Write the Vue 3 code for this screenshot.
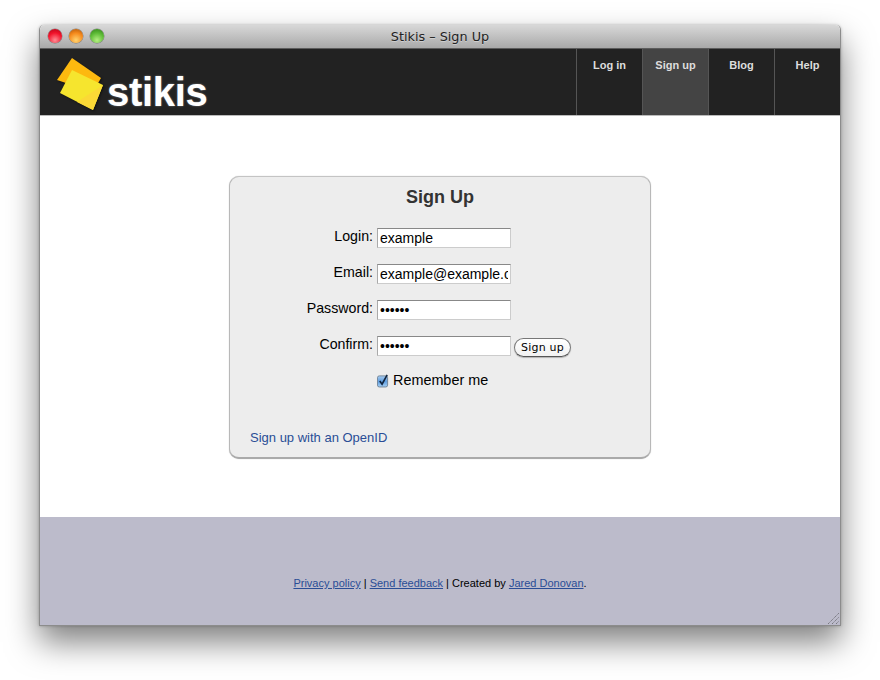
<script setup>
const navItems = [
  { label: 'Log in', active: false },
  { label: 'Sign up', active: true },
  { label: 'Blog', active: false },
  { label: 'Help', active: false }
]
const fields = [
  { label: 'Login:', type: 'text', value: 'example' },
  { label: 'Email:', type: 'text', value: 'example@example.com' },
  { label: 'Password:', type: 'password', value: 'secret' },
  { label: 'Confirm:', type: 'password', value: 'secret' }
]
</script>

<template>
  <div class="page">
    <div class="window">
      <div class="titlebar">
        <div class="lights">
          <span class="light red"></span>
          <span class="light amber"></span>
          <span class="light green"></span>
        </div>
        <span class="title">Stikis – Sign Up</span>
      </div>
      <header class="header">
        <div class="logo">
          <svg class="mark" width="52" height="57" viewBox="0 0 52 57">
            <polygon points="17,4 46,24 38,38 2,26" fill="#fdb90f" />
            <polygon points="17,16 48,31 38,56 5,39" fill="#f6e52e" />
            <polygon points="48,31 38,56 22,48" fill="#fbd936" />
          </svg>
          <span class="wordmark">stikis</span>
        </div>
        <nav class="nav">
          <a v-for="item in navItems" :key="item.label" class="nav-item" :class="{ active: item.active }">{{ item.label }}</a>
        </nav>
      </header>
      <main class="main">
        <section class="card">
          <h1 class="card-title">Sign Up</h1>
          <form class="form" @submit.prevent>
            <div v-for="(field, i) in fields" :key="field.label" class="row">
              <label class="label">{{ field.label }}</label>
              <input class="input" :type="field.type" :value="field.value" />
              <button v-if="i === 3" class="button" type="button">Sign up</button>
            </div>
            <div class="remember">
              <span class="check">
                <svg width="13" height="15" viewBox="0 0 13 15">
                  <defs>
                    <linearGradient id="checkFill" x1="0" y1="0" x2="0" y2="1">
                      <stop offset="0" stop-color="#a9cdf0" />
                      <stop offset="0.5" stop-color="#5f9ee0" />
                      <stop offset="1" stop-color="#a6d0f5" />
                    </linearGradient>
                  </defs>
                  <rect x="0.5" y="2.5" width="11" height="12" rx="2" fill="url(#checkFill)" stroke="#6f8296" />
                  <path d="M3 8 L5.5 11.5 L11 1.5" fill="none" stroke="#10243e" stroke-width="1.8" />
                </svg>
              </span>
              <span class="remember-text">Remember me</span>
            </div>
          </form>
          <a class="openid">Sign up with an OpenID</a>
        </section>
      </main>
      <footer class="footer">
        <p class="footer-text">
          <a>Privacy policy</a> | <a>Send feedback</a> | Created by <a>Jared Donovan</a>.
        </p>
        <svg class="grip" width="13" height="13" viewBox="0 0 13 13">
          <path d="M1 12 L12 1 M5 12 L12 5 M9 12 L12 9" stroke="#77777f" stroke-width="1" stroke-dasharray="1.4 0.6" fill="none" />
        </svg>
      </footer>
    </div>
  </div>
</template>

<style scoped>
.page {
  width: 880px;
  height: 680px;
  padding: 25px 0 0 39px;
  box-sizing: border-box;
  overflow: hidden;
  background: #fff;
  font-family: "Liberation Sans", Arial, sans-serif;
}
.window {
  width: 802px;
  height: 601px;
  display: flex;
  flex-direction: column;
  box-sizing: border-box;
  border-radius: 5px 5px 0 0;
  border: 1px solid #8c8c8c;
  border-top: 0;
  background: #fff;
  box-shadow: 0 16px 32px rgba(0, 0, 0, 0.5), 0 0 3px rgba(0, 0, 0, 0.25);
}
.titlebar {
  height: 23px;
  flex: none;
  position: relative;
  display: flex;
  align-items: center;
  justify-content: center;
  border-radius: 5px 5px 0 0;
  border-bottom: 1px solid #5c5c5c;
  background: linear-gradient(#d8d8d8, #a9a9a9);
}
.lights {
  position: absolute;
  left: 8px;
  top: 4px;
  display: flex;
  gap: 7px;
}
.light {
  width: 14px;
  height: 14px;
  border-radius: 50%;
  box-shadow: 0 0 0 0.5px rgba(70, 70, 70, 0.55);
}
.red { background: radial-gradient(circle at 50% 80%, #ff8d95 0, #f2132b 55%, #a80618 100%); }
.amber { background: radial-gradient(circle at 50% 80%, #ffd36f 0, #f5891b 55%, #a8530a 100%); }
.green { background: radial-gradient(circle at 50% 80%, #b5ef82 0, #5cba35 55%, #2f7c18 100%); }
.title {
  font-family: "DejaVu Sans", sans-serif;
  font-size: 12.8px;
  color: #222;
  text-shadow: 0 1px 0 rgba(255, 255, 255, 0.35);
}
.header {
  height: 67px;
  flex: none;
  display: flex;
  justify-content: space-between;
  box-sizing: border-box;
  background: #222;
  border-bottom: 1px solid #bbb;
}
.logo {
  display: flex;
  align-items: flex-end;
  padding-left: 15px;
}
.mark {
  margin-bottom: 4px;
  flex: none;
  filter: drop-shadow(1px 1px 1px rgba(0, 0, 0, 0.5));
}
.wordmark {
  margin-bottom: -2px;
  color: #fff;
  font-weight: 700;
  font-size: 40px;
  line-height: 50px;
  letter-spacing: -0.3px;
  text-shadow: 0 0 2px rgba(255, 255, 255, 0.45);
}
.nav {
  display: flex;
}
.nav-item {
  width: 66px;
  box-sizing: border-box;
  border-left: 1px solid #555;
  padding-top: 10px;
  text-align: center;
  color: #ddd;
  font-weight: 700;
  font-size: 11px;
  line-height: 13px;
}
.nav-item.active {
  background: #444;
}
.main {
  flex: 1;
  display: flex;
  justify-content: center;
  padding-top: 60px;
  background: #fff;
}
.card {
  width: 422px;
  height: 283px;
  box-sizing: border-box;
  position: relative;
  display: flex;
  flex-direction: column;
  border: 1px solid #b8b8b8;
  border-top-color: #c4c4c4;
  border-bottom: 2px solid #aaa;
  border-radius: 10px;
  background: #ededed;
  padding: 9px 0 0;
  font-size: 14px;
  color: #000;
  box-shadow: 0 0 1px rgba(0, 0, 0, 0.3);
}
.card-title {
  margin: 0 0 20px;
  text-align: center;
  font-size: 18px;
  line-height: 22px;
  font-weight: 700;
  color: #333;
}
.form {
  display: flex;
  flex-direction: column;
  gap: 16px;
}
.row {
  display: flex;
  height: 20px;
  align-items: flex-start;
}
.label {
  width: 143px;
  text-align: right;
  line-height: 16px;
  margin-right: 4px;
  flex: none;
  font-size: 14.2px;
}
.input {
  width: 134px;
  height: 20px;
  box-sizing: border-box;
  flex: none;
  margin: 0;
  padding: 0 2px 1px;
  border: 1px solid #ccc;
  border-top-color: #888;
  border-left-color: #aaa;
  border-radius: 0;
  outline: 0;
  background: #fff;
  color: #000;
  font-family: "Liberation Sans", Arial, sans-serif;
  font-size: 14px;
}
.button {
  width: 57px;
  height: 19px;
  margin: 2px 0 0 3px;
  padding: 0;
  flex: none;
  border: 1px solid #777;
  border-bottom-color: #555;
  border-radius: 10px;
  background: linear-gradient(#fff, #f2f2f2);
  color: #000;
  font-family: "DejaVu Sans", sans-serif;
  font-size: 11px;
  letter-spacing: 0.2px;
  box-shadow: 0 1px 1px rgba(0, 0, 0, 0.25);
}
.remember {
  display: flex;
  align-items: center;
  gap: 4px;
  margin: 0 0 0 147px;
  height: 16px;
}
.check {
  display: flex;
  width: 12px;
  height: 15px;
  flex: none;
}
.remember-text {
  font-size: 14.4px;
}
.openid {
  position: absolute;
  left: 20px;
  top: 253px;
  line-height: 16px;
  font-size: 13px;
  color: #2a4d96;
}
.footer {
  height: 108px;
  flex: none;
  position: relative;
  box-sizing: border-box;
  background: #bcbbcb;
  padding-top: 60px;
  font-size: 11px;
  color: #000;
}
.footer-text {
  margin: 0;
  text-align: center;
  line-height: 13px;
}
.footer-text a {
  color: #2a4d96;
  text-decoration: underline;
}
.grip {
  position: absolute;
  right: 0;
  bottom: 0;
}
</style>

<style>
body { margin: 0; background: #fff; }
</style>
